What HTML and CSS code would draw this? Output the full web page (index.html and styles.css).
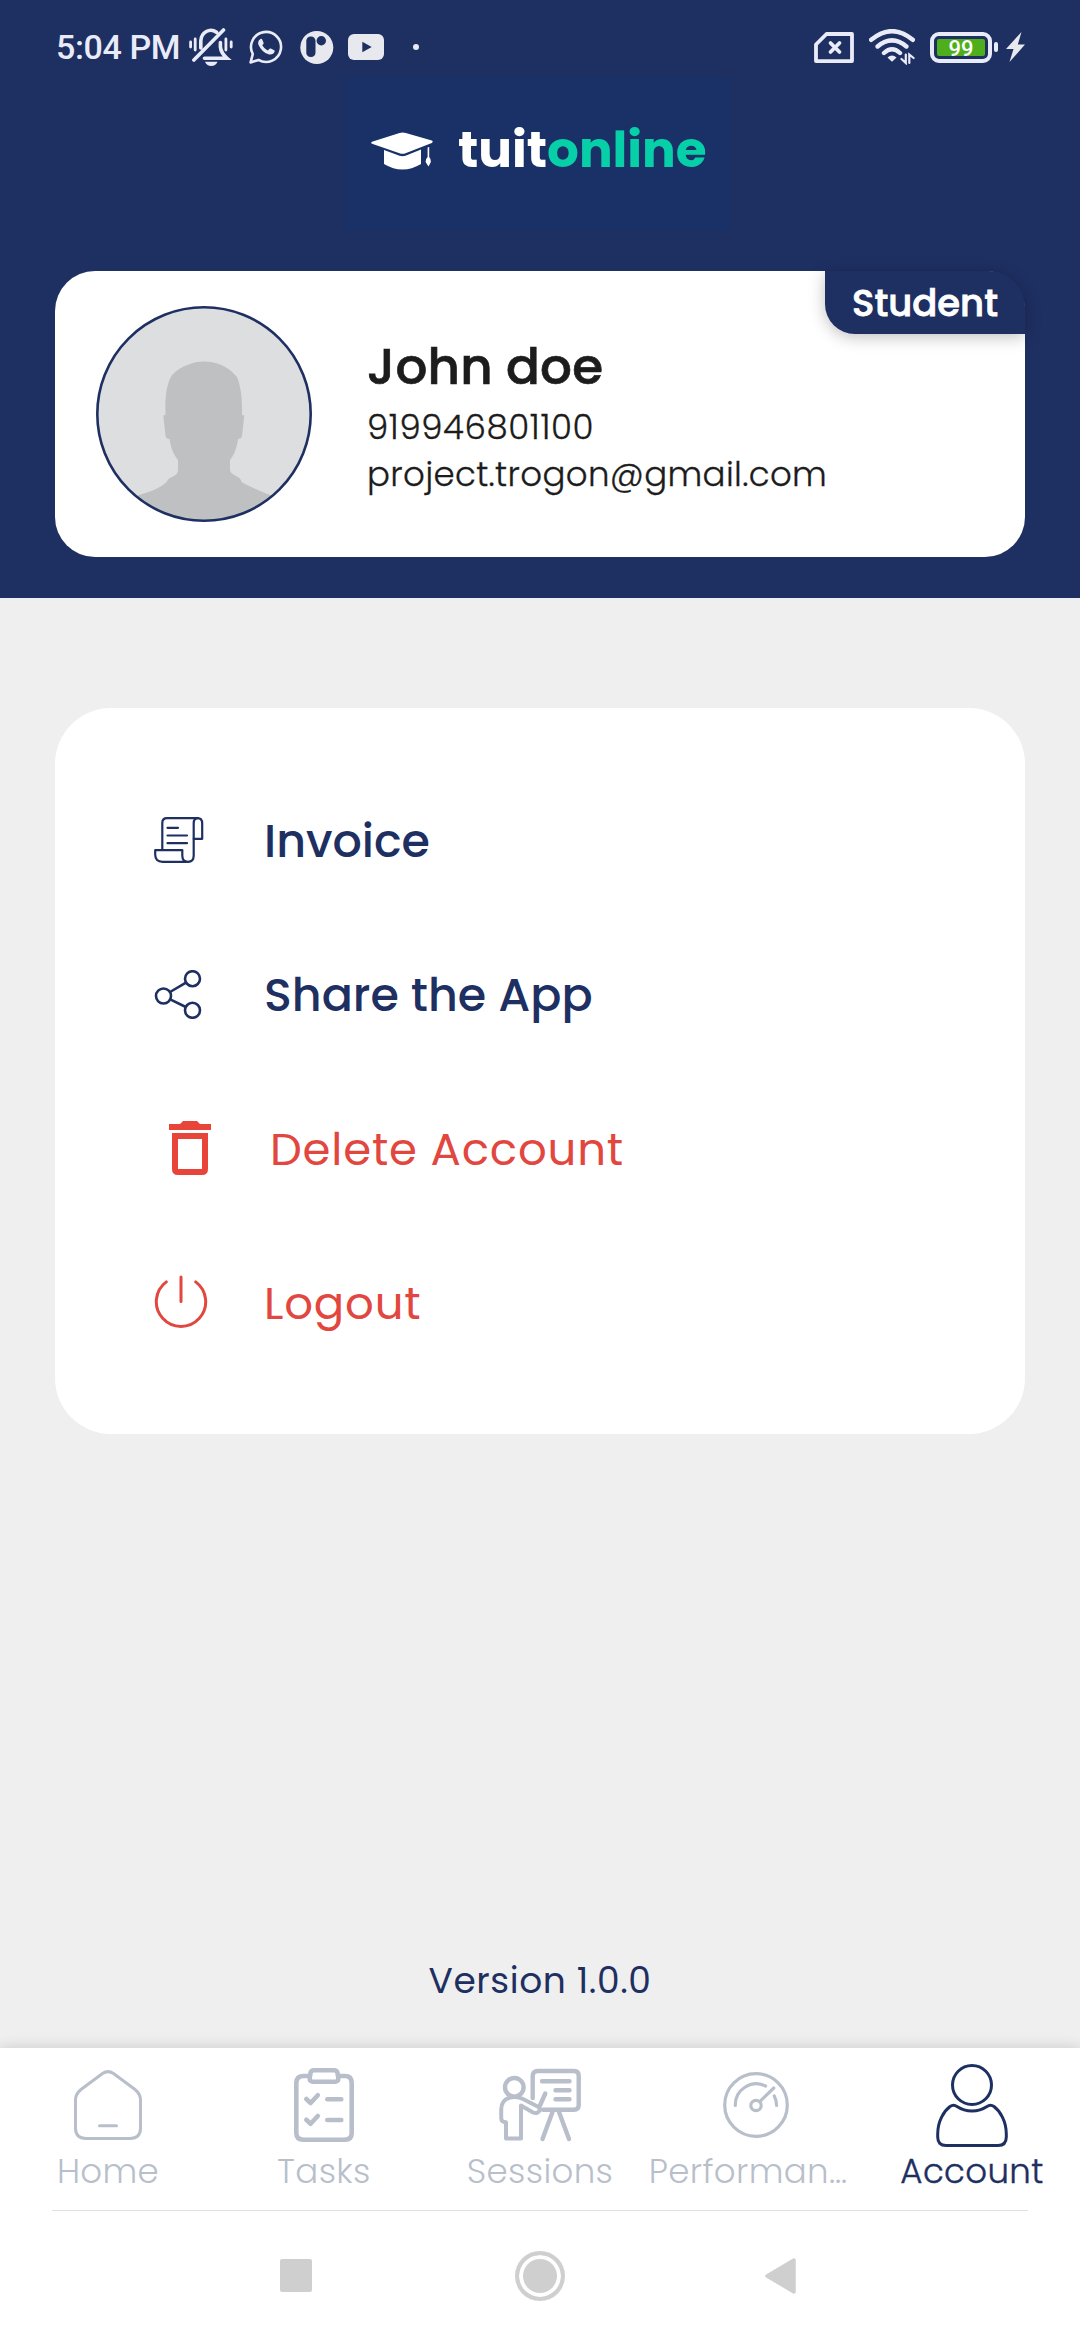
FILE: index.html
```html
<!DOCTYPE html>
<html lang="en">
  <head>
    <meta charset="UTF-8" />
    <title>Account</title>
    <link rel="stylesheet" href="styles.css">
  </head>
  <body>
    <header class="header">
      <!-- Status bar -->
      <div class="status-bar">
        <span class="time">5:04 PM</span>
        <svg class="bell" width="44" height="39" viewBox="0 0 44 39" fill="none" stroke="#e9ecf8" stroke-width="3.6" stroke-linecap="round">
          <path d="M11.8 20V13A10 11 0 0 1 27.5 4.3M31.4 14.5V19Q32 25 38 30.3H15.5M4.9 32L34.5 2" />
          <path d="M1.6 14V19M6.2 11V22M36.9 11V22M42.2 14V19" stroke-width="2.8" />
          <path d="M16 33.7H28.5Q26.5 38 22.3 38Q18 38 16 33.7Z" fill="#e9ecf8" stroke="none" />
        </svg>
        <svg class="whatsapp" width="34" height="34" viewBox="0 0 34 34">
          <path d="M1.6 32.4L3.8 24A15 15 0 1 1 9.5 29.9Z" fill="none" stroke="#e9ecf8" stroke-width="2.6" stroke-linejoin="round" />
          <path d="M11.5 9C9 10.5 8.5 13 9.8 15.5C12 20 15 23 19.5 24.3C22.5 25 25 24 25.6 21.6C25.8 20.8 25.5 20.4 24.8 20L21.8 18.6C21 18.3 20.6 18.5 20.2 19L19 20.5C16.5 19.5 14.5 17.5 13.3 15.3L14.4 13.9C14.7 13.4 14.7 13 14.5 12.5L13.3 9.7C13 8.9 12.2 8.7 11.5 9Z" fill="#e9ecf8" />
        </svg>
        <svg class="patreon" width="34" height="33" viewBox="0 0 34 33">
          <circle cx="16.8" cy="16.5" r="16.5" fill="#e8e9ef" />
          <rect x="6.3" y="5.5" width="9.2" height="20.5" rx="4.3" fill="#1e2f62" />
          <circle cx="21.3" cy="9.7" r="4.7" fill="#1e2f62" />
        </svg>
        <svg class="youtube" width="36" height="26" viewBox="0 0 36 26">
          <rect width="36" height="26" rx="6" fill="#e8e9ef" />
          <path d="M14.3 7.8L23.7 13L14.3 18.2Z" fill="#1e2f62" />
        </svg>
        <span class="more-dot"></span>
        <div class="status-right">
          <svg width="40" height="31" viewBox="0 0 40 31" fill="none" stroke="#e9ecf8" stroke-width="3.8" stroke-linejoin="round" stroke-linecap="round">
            <path d="M2 29.1V12.5L12.5 2H38V29.1Z" />
            <path d="M16.5 11L25.5 20M25.5 11L16.5 20" />
          </svg>
          <svg class="wifi" width="47" height="36" viewBox="0 0 47 36" fill="none" stroke="#e9ecf8" stroke-width="4.4" stroke-linecap="round">
            <path d="M2.2 10.8Q23 -6.5 43.8 10.8M8.6 17.5Q23 5.3 37.4 17.5M15 24Q23 16.5 31 24" />
            <path d="M18.5 28.5Q23 24.3 27.5 28.5L23 32.7Z" fill="#e9ecf8" stroke="none" />
            <path d="M32.5 30L36.8 34V25.5M44.6 29L40.3 25.5V34" stroke-width="2.2" />
          </svg>
          <div class="battery"><span>99</span></div>
          <span class="battery-tip"></span>
          <svg width="19" height="30" viewBox="0 0 19 30">
            <path d="M15.5 0L0 17H7.5L3.5 30L19 12.5H11.8Z" fill="#e8e9ef" />
          </svg>
        </div>
      </div>

      <div class="logo">
        <svg width="64" height="39" viewBox="0 0 64 39" fill="#fff">
          <path d="M1 9.8L28.5 .9Q31.6 0 34.8 .9L60.8 8.6Q62.6 9.8 60.8 11L34.5 21.2Q31.5 22.4 28.5 21.2L1 11.8Q-.6 10.8 1 9.8Z" />
          <path d="M13 18L28.5 23.7Q31.5 24.6 34.5 23.7L50 17.5V32Q31.5 43 13 32Z" />
          <path d="M56.6 15.5L58.2 15V25Q60.2 27 59.9 30L57.5 34.5L54.6 30Q54.4 27 56.6 25Z" />
        </svg>
        <div class="logo-text">tuit<span>online</span></div>
      </div>

      <div class="profile-card">
        <svg class="avatar" width="216" height="216" viewBox="0 0 216 216">
          <clipPath id="avatarClip"><circle cx="108" cy="108" r="106" /></clipPath>
          <circle cx="108" cy="108" r="106" fill="#dddee0" />
          <path clip-path="url(#avatarClip)" fill="#bfc0c2" d="M108 55.5C97 55.5 85 60 76 69C70 79 69 92 69.5 109L67.3 109.3L69.5 130Q70 133 73.5 133C75 143 78 149 82 154V164Q82 168 77 170.5Q72 172 70.5 176C64 182 54 186 43 189L20 200V216H196V200L174 189C164 185 152 180 145.5 176Q145 172 140 170Q134 167 134 164V154C138 149 141 142 142 133Q145 133 146 130L148.3 109.3L146 109C146.5 92 144.5 79 141 71C133 61 121 55.5 108 55.5Z" />
          <circle cx="108" cy="108" r="106.7" fill="none" stroke="#1e2f62" stroke-width="2.6" />
        </svg>
        <div class="profile-info">
          <div class="name">John doe</div>
          <div class="detail phone">919946801100</div>
          <div class="detail">project.trogon@gmail.com</div>
        </div>
        <div class="badge">Student</div>
      </div>
    </header>

    <main class="content">
      <div class="menu">
        <div class="menu-item">
          <svg class="menu-icon" width="50" height="46" viewBox="0 0 50 46" fill="none" stroke="#1e2f62" stroke-width="2.2" stroke-linecap="round" stroke-linejoin="round">
            <path d="M8.3 33V6Q8.3 1.2 13 1.2H43.5Q48.2 1.2 48.2 6.5V21.8H39.7" />
            <path d="M44 1.2Q39.7 1.2 39.7 6.5V38.5Q39.7 44.8 34 44.8H8.5Q1.2 44.8 1.2 37.5V33.2H28.3V38.5Q28.3 44.8 34 44.8" />
            <path d="M13.5 10.8H24M13.5 18.5H33M13.5 26.2H33" />
          </svg>
          <span class="menu-text">Invoice</span>
        </div>
        <div class="menu-item">
          <svg class="menu-icon" width="50" height="49" viewBox="-1 0 50 49" fill="none" stroke="#1e2f62" stroke-width="2.6">
            <circle cx="37.5" cy="8.7" r="7.5" />
            <circle cx="8.5" cy="26" r="7.5" />
            <circle cx="37.5" cy="40.3" r="7.5" />
            <path d="M15 22L31 12.6M15.2 29.4L30.8 37" />
          </svg>
          <span class="menu-text">Share the App</span>
        </div>
        <div class="menu-item danger delete">
          <svg class="menu-icon" width="42" height="54" viewBox="0 0 42 54">
            <path fill="#e9443a" fill-rule="evenodd" d="M0 3H11L14 0H28L31 3H42V9H0ZM3 12H39V48Q39 54 33 54H9Q3 54 3 48ZM9 18V48H33V18Z" />
          </svg>
          <span class="menu-text">Delete Account</span>
        </div>
        <div class="menu-item danger">
          <svg class="menu-icon" width="54" height="54" viewBox="-1 0 54 54" fill="none" stroke="#e2473f" stroke-width="3" stroke-linecap="round">
            <path d="M11.3 6.9A24.7 24.7 0 1 0 40.7 6.9M26 2V26.5" />
          </svg>
          <span class="menu-text">Logout</span>
        </div>
      </div>
      <div class="version">Version 1.0.0</div>
    </main>

    <nav class="tab-bar">
      <div class="tab">
        <div class="tab-icon">
          <svg width="68" height="70" viewBox="0 0 68 70" fill="none" stroke="#b8bfcb" stroke-width="3" stroke-linecap="round">
            <path d="M28.5 3.5Q34 -.2 39.5 3.5L61 19.5Q66.5 24 66.5 30V58Q66.5 68.4 56 68.4H12Q1.5 68.4 1.5 58V30Q1.5 24 7 19.5ZM25.5 55.7H42.5" />
          </svg>
        </div>
        <span class="tab-label">Home</span>
      </div>
      <div class="tab">
        <div class="tab-icon">
          <svg width="60" height="74" viewBox="0 0 60 74" fill="none" stroke="#b8bfcb" stroke-width="4.6" stroke-linecap="round" stroke-linejoin="round">
            <path d="M15 8H9.5Q2.3 8 2.3 15V65Q2.3 71.7 9.5 71.7H51Q57.7 71.7 57.7 65V15Q57.7 8 51 8H45" />
            <path d="M20 2.3H40Q43 2.3 43.5 5L44.3 10Q44.5 13.7 41 13.7H19Q15.5 13.7 15.7 10L16.5 5Q17 2.3 20 2.3Z" />
            <path d="M12.3 31L16.6 35L23.8 27.3M12.3 51.7L16.6 55.7L23.8 48M33.3 31.3H47.3M33.3 52H47.3" />
          </svg>
        </div>
        <span class="tab-label">Tasks</span>
      </div>
      <div class="tab">
        <div class="tab-icon">
          <svg width="82" height="74" viewBox="0 0 82 74" fill="none" stroke="#b8bfcb" stroke-width="4.4" stroke-linecap="round" stroke-linejoin="round">
            <circle cx="15.3" cy="19.3" r="9.3" />
            <path d="M33.7 30V8Q33.7 3 38.7 3H75Q79.7 3 79.7 8V37Q79.7 41.7 75 41.7H44M43 13.3H70.5M56.5 22.3H70.5M56.5 31.3H70.5M46.3 25.5L40.5 38.5M53.5 44L43.5 71M60 44L70 71" />
            <path d="M11 29.5Q2.2 32 2.2 41.5V50Q2.2 54 7 54.3V70.5H22V37.5L34 44.5Q39 46.5 40.7 42Q41 39.5 38.5 38.5L24 31Q18 28 11 29.5Z" stroke-width="4" />
          </svg>
        </div>
        <span class="tab-label">Sessions</span>
      </div>
      <div class="tab">
        <div class="tab-icon">
          <svg width="66" height="68" viewBox="0 0 66 68" fill="none" stroke="#b8bfcb" stroke-width="3.2" stroke-linecap="round">
            <circle cx="33" cy="34" r="31.3" />
            <circle cx="33" cy="34.5" r="5.2" />
            <path d="M12.3 34.5A21 21 0 0 1 42.5 15M51.3 25Q53.6 29.5 53.6 34.5M37 30.3L50.8 17" />
          </svg>
        </div>
        <span class="tab-label clipped">Performan…</span>
      </div>
      <div class="tab active">
        <div class="tab-icon">
          <svg width="72" height="83" viewBox="0 0 72 83" fill="none" stroke="#1e2f62" stroke-width="3">
            <circle cx="36" cy="21" r="19.5" />
            <path d="M1.7 73V70C1.7 57 8 47 14 42.5Q17.5 40 21 42.5C30 48.5 42 48.5 51 42.5Q54.5 40 58 42.5C64 47 70.3 57 70.3 70V73Q70.3 81.5 62 81.5H10Q1.7 81.5 1.7 73Z" />
          </svg>
        </div>
        <span class="tab-label">Account</span>
      </div>
    </nav>
    <div class="divider"></div>

    <!-- Android navigation buttons -->
    <div class="system-nav">
      <span class="recents"></span>
      <span class="home-button"></span>
      <svg class="back" width="32" height="38" viewBox="0 0 32 38">
        <path d="M3 19L30 3V35Z" fill="#cfcfcf" stroke="#cfcfcf" stroke-width="3.5" stroke-linejoin="round" />
      </svg>
    </div>
  </body>
</html>
```

FILE: styles.css
```css
* {
  box-sizing: border-box;
}

body {
  margin: 0;
  width: 1080px;
  height: 2340px;
  display: flex;
  flex-direction: column;
  overflow: hidden;
  background-color: #efefef;
  font-family: "Poppins", "Inter", sans-serif;
  color: #1c1c1c;
}

svg {
  display: block;
  flex-shrink: 0;
}

.header {
  height: 598px;
  background-color: #1e2f62;
}

/* Status bar */
.status-bar {
  height: 77px;
  padding: 17px 55px 0 56px;
  display: flex;
  align-items: center;
}

.time {
  width: 133px;
  font-family: "Roboto", sans-serif;
  font-size: 34px;
  font-weight: 500;
  line-height: 40px;
  letter-spacing: -0.4px;
  color: #e9ecf8;
  white-space: nowrap;
}

.whatsapp {
  margin-left: 16px;
}

.patreon {
  margin-left: 17px;
}

.youtube {
  margin-left: 14px;
}

.more-dot {
  width: 6px;
  height: 6px;
  margin-left: 29px;
  border-radius: 50%;
  background-color: #e9ecf8;
}

.status-right {
  margin-left: auto;
  display: flex;
  align-items: center;
}

.wifi {
  margin: 0 14px 0 15px;
}

.battery {
  width: 62px;
  height: 31px;
  padding: 3px;
  border: 4px solid #e9ecf8;
  border-radius: 9px;
}

.battery span {
  display: block;
  height: 17px;
  border-radius: 2px;
  background-color: #4fae1c;
  color: #fff;
  font: 500 22px/19px "Roboto", sans-serif;
  text-align: center;
}

.battery-tip {
  width: 4px;
  height: 10px;
  margin: 0 8px 0 2px;
  border-radius: 2px;
  background-color: #e9ecf8;
}

/* Logo */
.logo {
  width: 388px;
  height: 153px;
  margin-left: 344px;
  padding: 55px 0 0 27px;
  display: flex;
  background-color: #193166;
}

.logo-text {
  margin: -12px 0 0 23px;
  font-size: 50px;
  font-weight: 700;
  line-height: 60px;
  color: #fff;
}

.logo-text span {
  color: #07cfa8;
}

/* Profile card */
.profile-card {
  position: relative;
  width: 970px;
  height: 286px;
  margin: 41px auto 0;
  padding: 35px 0 0 41px;
  display: flex;
  border-radius: 40px;
  background-color: #fff;
}

.profile-info {
  margin: 31px 0 0 55px;
}

.name {
  margin-bottom: 7px;
  font-size: 50px;
  font-weight: 500;
  line-height: 60px;
  letter-spacing: 0.2px;
  -webkit-text-stroke: 0.7px #1c1c1c;
}

.detail {
  font-size: 34px;
  font-weight: 300;
  line-height: 47px;
  letter-spacing: 0.35px;
  -webkit-text-stroke: 0.3px #1c1c1c;
}

.phone {
  letter-spacing: 0.6px;
}

.badge {
  position: absolute;
  top: 0;
  right: 0;
  width: 200px;
  height: 63px;
  border-radius: 0 36px 0 30px;
  background-color: #1e2f62;
  box-shadow: 0 3px 16px rgba(0, 0, 0, 0.25);
  color: #fff;
  font-size: 37px;
  font-weight: 500;
  line-height: 64px;
  text-align: center;
  -webkit-text-stroke: 0.8px #fff;
}

/* Menu */
.content {
  flex: 1;
  display: flex;
  flex-direction: column;
  align-items: center;
}

.menu {
  width: 970px;
  height: 726px;
  margin-top: 110px;
  padding: 55px 0 0 98px;
  border-radius: 56px;
  background-color: #fff;
}

.menu-item {
  height: 154px;
  display: flex;
  align-items: center;
  color: #1e2f62;
}

.menu-icon {
  margin-left: 1px;
}

.menu-text {
  margin-left: 60px;
  padding-top: 2px;
  font-size: 46px;
  font-weight: 500;
}

.danger {
  color: #e2473f;
}

.danger .menu-text {
  margin-left: 56px;
  padding-top: 4px;
  font-size: 45px;
  font-weight: 400;
  letter-spacing: 0.8px;
}

.delete {
  padding-left: 15px;
}

.delete .menu-text {
  margin-left: 59px;
}

.version {
  margin-top: 522px;
  color: #1e2f62;
  font-size: 36px;
  line-height: 50px;
  letter-spacing: 0.6px;
}

/* Bottom tabs */
.tab-bar {
  height: 162px;
  padding-top: 8px;
  display: flex;
  background-color: #fff;
  box-shadow: 0 0 14px rgba(0, 0, 0, 0.16);
}

.tab {
  width: 216px;
  display: flex;
  flex-direction: column;
  align-items: center;
  color: #b8bfcb;
}

.tab-icon {
  height: 98px;
  display: flex;
  align-items: center;
}

.tab-label {
  font-size: 34px;
  font-weight: 300;
  line-height: 34px;
  letter-spacing: 0.35px;
  white-space: nowrap;
}

.clipped {
  margin-right: 16px;
}

.active {
  color: #1e2f62;
}

.active .tab-label {
  -webkit-text-stroke: 0.4px #1e2f62;
}

.divider {
  position: relative;
  height: 1px;
  border: solid #fff;
  border-width: 0 52px;
  background-color: #e2e2e2;
}

.system-nav {
  position: relative;
  height: 129px;
  padding-left: 280px;
  display: flex;
  align-items: center;
  background-color: #fff;
}

.recents {
  width: 32px;
  height: 33px;
  border-radius: 2px;
  background-color: #cfcfcf;
}

.home-button {
  width: 50px;
  height: 50px;
  margin: 0 199px 0 203px;
  border: 4px solid #cfcfcf;
  border-radius: 50%;
  background-color: #cfcfcf;
  box-shadow: inset 0 0 0 4px #fff;
}
```
